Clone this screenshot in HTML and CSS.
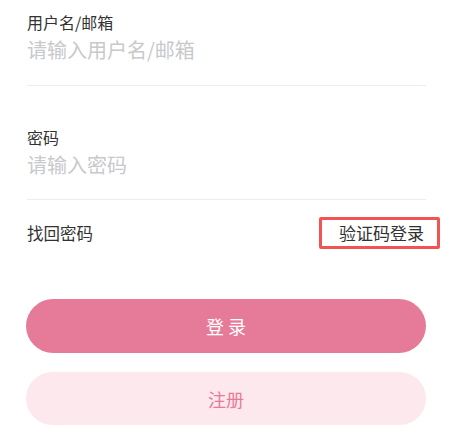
FILE: index.html
```html
<!DOCTYPE html>
<html lang="zh-CN">
<head>
  <meta charset="UTF-8">
  <meta name="viewport" content="width=device-width, initial-scale=1.0">
  <title>登录</title>
  <link rel="stylesheet" href="styles.css">
</head>
<body>
  <div class="login-page">
    <div class="form-item first">
      <label for="account">用户名/邮箱</label>
      <input type="text" id="account" placeholder="请输入用户名/邮箱">
    </div>
    <div class="form-item">
      <label for="password">密码</label>
      <input type="password" id="password" placeholder="请输入密码">
    </div>

    <div class="links">
      <span class="link">找回密码</span>
      <span class="link code-login">验证码登录</span>
    </div>

    <button class="btn btn-primary">登 录</button>
    <button class="btn btn-light">注册</button>
  </div>
</body>
</html>
```

FILE: styles.css
```css
* {
  box-sizing: border-box;
}
body {
  margin: 0;
  background-color: #fff;
  font-family: "Noto Sans CJK SC", "Noto Sans", sans-serif;
  color: #323233;
}
.login-page {
  padding: 0 26px;
}
.form-item {
  margin-left: 1px;
  padding: 39px 0 20px;
  border-bottom: 1px solid #ebedf0;
}
.form-item.first {
  padding-top: 10px;
  padding-bottom: 21px;
}
.form-item label {
  display: block;
  font-size: 16px;
  line-height: 24px;
  height: 24px;
  color: #323233;
}
.form-item input {
  display: block;
  width: 100%;
  margin-top: 2px;
  padding: 0;
  border: none;
  outline: none;
  font-family: inherit;
  font-size: 20px;
  line-height: 28px;
  height: 28px;
  color: #323233;
}
.form-item input::placeholder {
  color: #c8c9cc;
}
.links {
  display: flex;
  justify-content: space-between;
  align-items: center;
  margin-top: 17px;
  margin-left: 1px;
  margin-right: -14px;
  height: 32px;
}
.link {
  font-size: 16.5px;
  line-height: 24px;
  color: #323233;
}
.code-login {
  font-size: 17px;
  padding: 1px 13px 1px 17px;
  border: 3px solid #f25454;
  border-radius: 2px;
}
.btn {
  display: block;
  width: 100%;
  border: none;
  border-radius: 27px;
  font-family: inherit;
  font-size: 18px;
  cursor: pointer;
}
.btn-primary {
  margin-top: 50px;
  height: 54px;
  background-color: #e57b98;
  color: #fff;
}
.btn-light {
  margin-top: 19px;
  height: 53px;
  background-color: #fde8ee;
  color: #e57b98;
}
```
